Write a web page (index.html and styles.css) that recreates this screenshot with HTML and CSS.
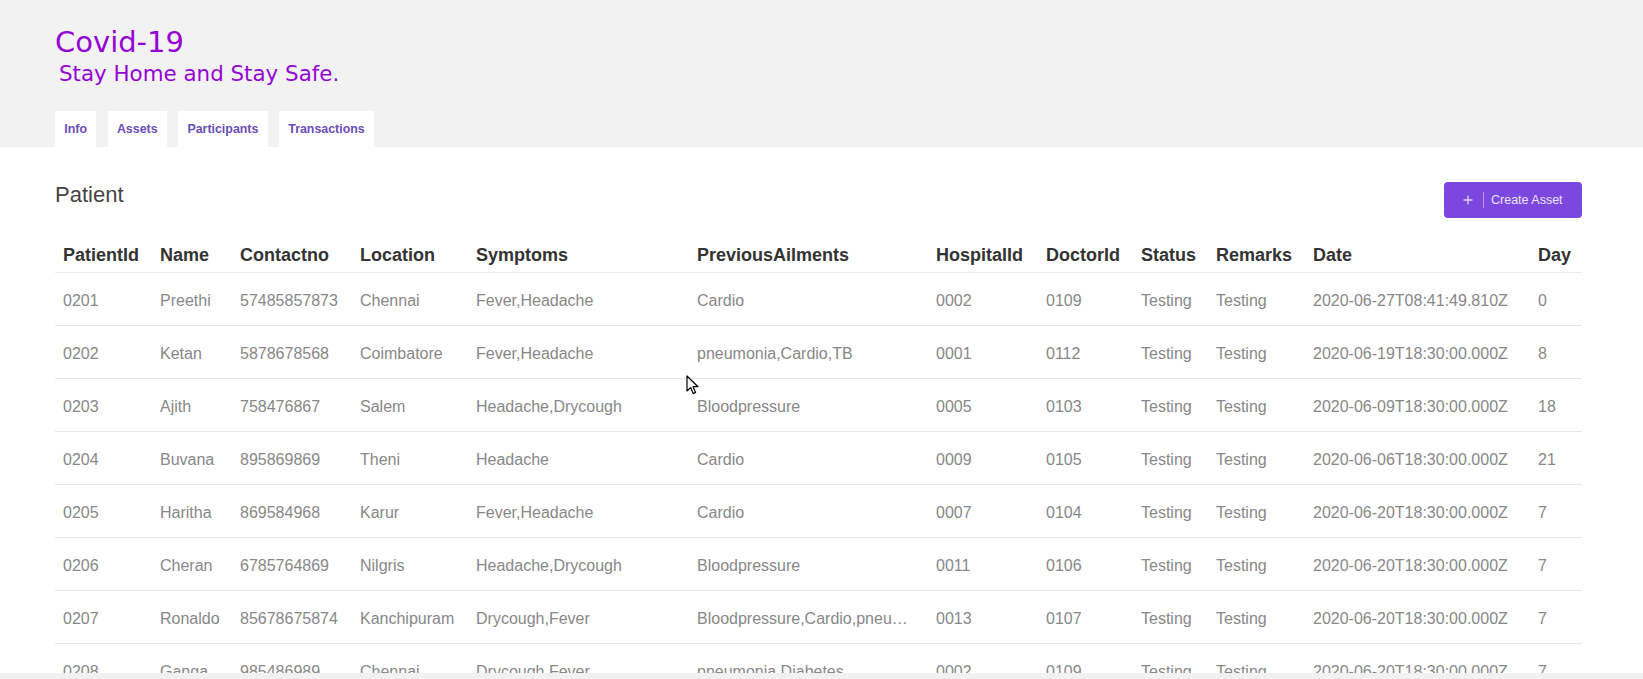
FILE: index.html
```html
<!DOCTYPE html>
<html>
<head>
<meta charset="utf-8">
<link rel="stylesheet" href="styles.css">
</head>
<body>
<header class="top">
  <h1 class="title">Covid-19</h1>
  <p class="subtitle">Stay Home and Stay Safe.</p>
  <nav class="tabs">
    <a class="tab">Info</a>
    <a class="tab">Assets</a>
    <a class="tab">Participants</a>
    <a class="tab">Transactions</a>
  </nav>
</header>
<main class="panel">
  <div class="panel-head">
    <h2 class="panel-title">Patient</h2>
    <button class="create-btn">
      <svg class="plus" width="10" height="10" viewBox="0 0 10 10"><path d="M5 0.5V9.5M0.5 5H9.5" stroke="#ddd0fb" stroke-width="1.3" fill="none"/></svg>
      <span class="sep"></span>
      <span class="btn-label">Create Asset</span>
    </button>
  </div>
  <table class="grid">
    <colgroup>
      <col class="c1"><col class="c2"><col class="c3"><col class="c4"><col class="c5"><col class="c6">
      <col class="c7"><col class="c8"><col class="c9"><col class="c10"><col class="c11"><col class="c12">
    </colgroup>
    <thead>
      <tr><th>PatientId</th><th>Name</th><th>Contactno</th><th>Location</th><th>Symptoms</th><th>PreviousAilments</th><th>HospitalId</th><th>DoctorId</th><th>Status</th><th>Remarks</th><th>Date</th><th>Day</th></tr>
    </thead>
    <tbody>
      <tr><td>0201</td><td>Preethi</td><td>57485857873</td><td>Chennai</td><td>Fever,Headache</td><td>Cardio</td><td>0002</td><td>0109</td><td>Testing</td><td>Testing</td><td>2020-06-27T08:41:49.810Z</td><td>0</td></tr>
      <tr><td>0202</td><td>Ketan</td><td>5878678568</td><td>Coimbatore</td><td>Fever,Headache</td><td>pneumonia,Cardio,TB</td><td>0001</td><td>0112</td><td>Testing</td><td>Testing</td><td>2020-06-19T18:30:00.000Z</td><td>8</td></tr>
      <tr><td>0203</td><td>Ajith</td><td>758476867</td><td>Salem</td><td>Headache,Drycough</td><td>Bloodpressure</td><td>0005</td><td>0103</td><td>Testing</td><td>Testing</td><td>2020-06-09T18:30:00.000Z</td><td>18</td></tr>
      <tr><td>0204</td><td>Buvana</td><td>895869869</td><td>Theni</td><td>Headache</td><td>Cardio</td><td>0009</td><td>0105</td><td>Testing</td><td>Testing</td><td>2020-06-06T18:30:00.000Z</td><td>21</td></tr>
      <tr><td>0205</td><td>Haritha</td><td>869584968</td><td>Karur</td><td>Fever,Headache</td><td>Cardio</td><td>0007</td><td>0104</td><td>Testing</td><td>Testing</td><td>2020-06-20T18:30:00.000Z</td><td>7</td></tr>
      <tr><td>0206</td><td>Cheran</td><td>6785764869</td><td>Nilgris</td><td>Headache,Drycough</td><td>Bloodpressure</td><td>0011</td><td>0106</td><td>Testing</td><td>Testing</td><td>2020-06-20T18:30:00.000Z</td><td>7</td></tr>
      <tr><td>0207</td><td>Ronaldo</td><td>85678675874</td><td>Kanchipuram</td><td>Drycough,Fever</td><td>Bloodpressure,Cardio,pneumonia</td><td>0013</td><td>0107</td><td>Testing</td><td>Testing</td><td>2020-06-20T18:30:00.000Z</td><td>7</td></tr>
      <tr><td>0208</td><td>Ganga</td><td>985486989</td><td>Chennai</td><td>Drycough,Fever</td><td>pneumonia,Diabetes</td><td>0002</td><td>0109</td><td>Testing</td><td>Testing</td><td>2020-06-20T18:30:00.000Z</td><td>7</td></tr>
    </tbody>
  </table>
</main>
<svg class="cursor" width="14" height="21" viewBox="0 0 14 21"><path d="M1 1L1 16L4.6 12.6L7.2 18.6L9.6 17.5L7 11.7L12 11.7Z" fill="#fff" stroke="#000" stroke-width="1.2" stroke-linejoin="round"/></svg>
</body>
</html>
```

FILE: styles.css
```css
html, body {
  margin: 0;
  padding: 0;
}
body {
  background: #f1f1f1;
  font-family: "Liberation Sans", Arial, sans-serif;
  width: 1643px;
  height: 679px;
  overflow: hidden;
  position: relative;
}
.top {
  background: #f2f2f2;
  height: 147px;
  box-sizing: border-box;
  padding: 25px 61px 0 55px;
  display: flex;
  flex-direction: column;
}
.title {
  margin: 0;
  font-family: "DejaVu Sans", sans-serif;
  font-weight: normal;
  font-size: 29px;
  line-height: 34px;
  color: #9506d4;
}
.subtitle {
  margin: 2px 0 0 4px;
  font-family: "DejaVu Sans", sans-serif;
  font-size: 21.4px;
  line-height: 26px;
  color: #9506d4;
}
.tabs {
  margin-top: 24px;
  display: flex;
  gap: 11.3px;
}
.tab {
  display: flex;
  align-items: center;
  height: 36px;
  padding: 0 9.3px;
  background: #ffffff;
  font-weight: bold;
  font-size: 12.4px;
  color: #6b4db9;
}
.panel {
  background: #ffffff;
  height: 526px;
  overflow: hidden;
  box-sizing: border-box;
  padding: 35px 61px 0 55px;
}
.panel-head {
  display: flex;
  justify-content: space-between;
  align-items: flex-start;
  height: 36px;
}
.panel-title {
  margin: 0;
  font-weight: normal;
  font-size: 22px;
  line-height: 26px;
  color: #444;
}
.create-btn {
  display: flex;
  align-items: center;
  height: 36px;
  width: 138px;
  box-sizing: border-box;
  padding: 0 19px;
  border: none;
  border-radius: 4px;
  background: #7b47de;
  font-family: "Liberation Sans", Arial, sans-serif;
  font-size: 12.5px;
  color: #ece4ff;
}
.plus {
  display: block;
  flex: none;
}
.sep {
  display: block;
  width: 1px;
  height: 16px;
  background: rgba(255, 255, 255, 0.45);
  margin: 0 7px 0 10px;
}
.btn-label {
  white-space: nowrap;
}
.grid {
  margin-top: 14px;
  width: 1527px;
  table-layout: fixed;
  border-collapse: collapse;
}
.c1 { width: 97px; }
.c2 { width: 80px; }
.c3 { width: 120px; }
.c4 { width: 116px; }
.c5 { width: 221px; }
.c6 { width: 239px; }
.c7 { width: 110px; }
.c8 { width: 95px; }
.c9 { width: 75px; }
.c10 { width: 97px; }
.c11 { width: 225px; }
.c12 { width: 52px; }
.grid th {
  text-align: left;
  font-weight: bold;
  font-size: 18px;
  line-height: 20px;
  color: #333;
  padding: 13px 8px 7px;
  border-bottom: 1px solid #ececec;
  white-space: nowrap;
}
.grid td {
  font-size: 16px;
  line-height: 20px;
  color: #888;
  padding: 18px 8px 14px;
  border-bottom: 1px solid #e6e6e6;
  white-space: nowrap;
  overflow: hidden;
  text-overflow: ellipsis;
}
.cursor {
  position: absolute;
  left: 686px;
  top: 375px;
}
```
